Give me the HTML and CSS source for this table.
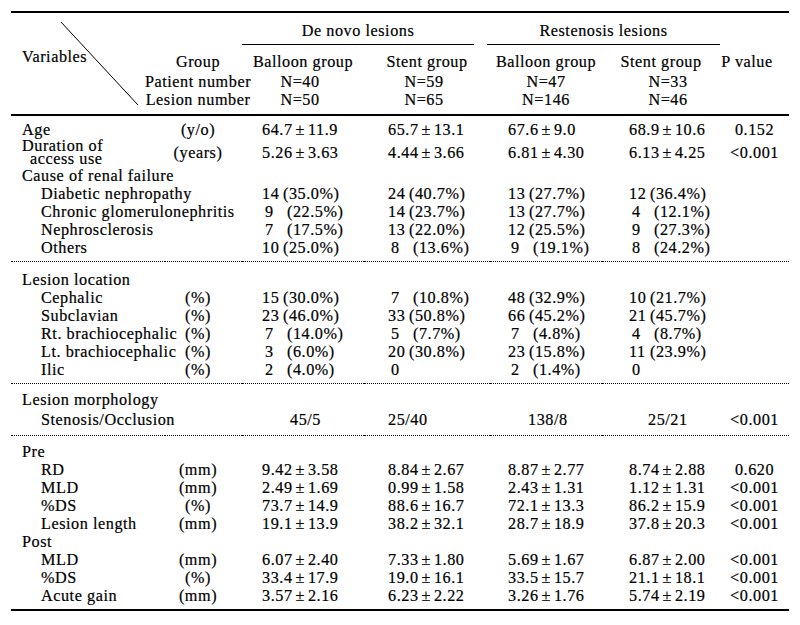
FILE: index.html
```html
<!DOCTYPE html>
<html lang="en">
<head>
<meta charset="utf-8">
<title>Table</title>
<link rel="stylesheet" href="styles.css">
</head>
<body>
<div class="figure">
  <svg class="diag" width="160" height="120" viewBox="0 0 160 120" aria-hidden="true">
    <line x1="61" y1="22" x2="138" y2="105" stroke="#000" stroke-width="1"/>
  </svg>
  <div class="toprule"></div>
  <table class="tbl">
    <colgroup>
      <col class="w0"><col class="w1"><col class="w2"><col class="w3"><col class="w4"><col class="w5"><col class="w6">
    </colgroup>
    <thead>
      <tr class="ra">
        <th></th><th></th>
        <th colspan="2"><div class="span dn">De novo lesions</div></th>
        <th colspan="2"><div class="span rs">Restenosis lesions</div></th>
        <th></th>
      </tr>
      <tr class="rb">
        <th class="var">Variables</th>
        <th class="unit">Group</th>
        <th class="c">Balloon group</th>
        <th class="c">Stent group</th>
        <th class="c">Balloon group</th>
        <th class="c">Stent group</th>
        <th class="c pvh">P value</th>
      </tr>
      <tr class="rc">
        <th></th>
        <th class="unit"><div class="ctr"><span>Patient number<br>Lesion number</span></div></th>
        <th class="c n2">N=40<br>N=50</th>
        <th class="c n3">N=59<br>N=65</th>
        <th class="c n4">N=47<br>N=146</th>
        <th class="c n5">N=33<br>N=46</th>
        <th></th>
      </tr>
    </thead>
    <tbody class="sec">
      <tr>
        <td class="lab">Age</td><td class="unit">(y/o)</td>
        <td class="v2">64.7<span class="pm">±</span>11.9</td>
        <td class="v3">65.7<span class="pm">±</span>13.1</td>
        <td class="v4">67.6<span class="pm">±</span>9.0</td>
        <td class="v5">68.9<span class="pm">±</span>10.6</td>
        <td class="pv">0.152</td>
      </tr>
      <tr class="dur">
        <td class="lab"><div class="two">Duration of<br><span class="ind">access use</span></div></td><td class="unit">(years)</td>
        <td class="v2">5.26<span class="pm">±</span>3.63</td>
        <td class="v3">4.44<span class="pm">±</span>3.66</td>
        <td class="v4">6.81<span class="pm">±</span>4.30</td>
        <td class="v5">6.13<span class="pm">±</span>4.25</td>
        <td class="pv">&lt;0.001</td>
      </tr>
      <tr>
        <td class="lab">Cause of renal failure</td><td></td><td></td><td></td><td></td><td></td><td></td>
      </tr>
      <tr>
        <td class="sub">Diabetic nephropathy</td><td></td>
        <td class="v2"><span class="n">14</span>(35.0%)</td>
        <td class="v3"><span class="n">24</span>(40.7%)</td>
        <td class="v4"><span class="n">13</span>(27.7%)</td>
        <td class="v5"><span class="n">12</span>(36.4%)</td>
        <td></td>
      </tr>
      <tr>
        <td class="sub">Chronic glomerulonephritis</td><td></td>
        <td class="v2"><span class="n s">9</span>(22.5%)</td>
        <td class="v3"><span class="n">14</span>(23.7%)</td>
        <td class="v4"><span class="n">13</span>(27.7%)</td>
        <td class="v5"><span class="n s">4</span>(12.1%)</td>
        <td></td>
      </tr>
      <tr>
        <td class="sub">Nephrosclerosis</td><td></td>
        <td class="v2"><span class="n s">7</span>(17.5%)</td>
        <td class="v3"><span class="n">13</span>(22.0%)</td>
        <td class="v4"><span class="n">12</span>(25.5%)</td>
        <td class="v5"><span class="n s">9</span>(27.3%)</td>
        <td></td>
      </tr>
      <tr class="last">
        <td class="sub">Others</td><td></td>
        <td class="v2"><span class="n">10</span>(25.0%)</td>
        <td class="v3"><span class="n s">8</span>(13.6%)</td>
        <td class="v4"><span class="n s">9</span>(19.1%)</td>
        <td class="v5"><span class="n s">8</span>(24.2%)</td>
        <td></td>
      </tr>
    </tbody>
    <tbody class="sec s2">
      <tr class="first">
        <td class="lab">Lesion location</td><td></td><td></td><td></td><td></td><td></td><td></td>
      </tr>
      <tr>
        <td class="sub">Cephalic</td><td class="unit">(%)</td>
        <td class="v2"><span class="n">15</span>(30.0%)</td>
        <td class="v3"><span class="n s">7</span>(10.8%)</td>
        <td class="v4"><span class="n">48</span>(32.9%)</td>
        <td class="v5"><span class="n">10</span>(21.7%)</td>
        <td></td>
      </tr>
      <tr>
        <td class="sub">Subclavian</td><td class="unit">(%)</td>
        <td class="v2"><span class="n">23</span>(46.0%)</td>
        <td class="v3"><span class="n">33</span>(50.8%)</td>
        <td class="v4"><span class="n">66</span>(45.2%)</td>
        <td class="v5"><span class="n">21</span>(45.7%)</td>
        <td></td>
      </tr>
      <tr>
        <td class="sub">Rt. brachiocephalic</td><td class="unit">(%)</td>
        <td class="v2"><span class="n s">7</span>(14.0%)</td>
        <td class="v3"><span class="n s">5</span>(7.7%)</td>
        <td class="v4"><span class="n s">7</span>(4.8%)</td>
        <td class="v5"><span class="n s">4</span>(8.7%)</td>
        <td></td>
      </tr>
      <tr>
        <td class="sub">Lt. brachiocephalic</td><td class="unit">(%)</td>
        <td class="v2"><span class="n s">3</span>(6.0%)</td>
        <td class="v3"><span class="n">20</span>(30.8%)</td>
        <td class="v4"><span class="n">23</span>(15.8%)</td>
        <td class="v5"><span class="n">11</span>(23.9%)</td>
        <td></td>
      </tr>
      <tr class="last">
        <td class="sub">Ilic</td><td class="unit">(%)</td>
        <td class="v2"><span class="n s">2</span>(4.0%)</td>
        <td class="v3"><span class="n s">0</span></td>
        <td class="v4"><span class="n s">2</span>(1.4%)</td>
        <td class="v5"><span class="n s">0</span></td>
        <td></td>
      </tr>
    </tbody>
    <tbody class="sec s3">
      <tr class="first">
        <td class="lab">Lesion morphology</td><td></td><td></td><td></td><td></td><td></td><td></td>
      </tr>
      <tr class="last sten">
        <td class="sub">Stenosis/Occlusion</td><td></td>
        <td class="st2">45/5</td>
        <td class="st3">25/40</td>
        <td class="st4">138/8</td>
        <td class="st5">25/21</td>
        <td class="pv">&lt;0.001</td>
      </tr>
    </tbody>
    <tbody class="sec s4">
      <tr class="first">
        <td class="lab">Pre</td><td></td><td></td><td></td><td></td><td></td><td></td>
      </tr>
      <tr>
        <td class="sub">RD</td><td class="unit">(mm)</td>
        <td class="v2">9.42<span class="pm">±</span>3.58</td>
        <td class="v3">8.84<span class="pm">±</span>2.67</td>
        <td class="v4">8.87<span class="pm">±</span>2.77</td>
        <td class="v5">8.74<span class="pm">±</span>2.88</td>
        <td class="pv">0.620</td>
      </tr>
      <tr>
        <td class="sub">MLD</td><td class="unit">(mm)</td>
        <td class="v2">2.49<span class="pm">±</span>1.69</td>
        <td class="v3">0.99<span class="pm">±</span>1.58</td>
        <td class="v4">2.43<span class="pm">±</span>1.31</td>
        <td class="v5">1.12<span class="pm">±</span>1.31</td>
        <td class="pv">&lt;0.001</td>
      </tr>
      <tr>
        <td class="sub">%DS</td><td class="unit">(%)</td>
        <td class="v2">73.7<span class="pm">±</span>14.9</td>
        <td class="v3">88.6<span class="pm">±</span>16.7</td>
        <td class="v4">72.1<span class="pm">±</span>13.3</td>
        <td class="v5">86.2<span class="pm">±</span>15.9</td>
        <td class="pv">&lt;0.001</td>
      </tr>
      <tr>
        <td class="sub">Lesion length</td><td class="unit">(mm)</td>
        <td class="v2">19.1<span class="pm">±</span>13.9</td>
        <td class="v3">38.2<span class="pm">±</span>32.1</td>
        <td class="v4">28.7<span class="pm">±</span>18.9</td>
        <td class="v5">37.8<span class="pm">±</span>20.3</td>
        <td class="pv">&lt;0.001</td>
      </tr>
      <tr>
        <td class="lab">Post</td><td></td><td></td><td></td><td></td><td></td><td></td>
      </tr>
      <tr>
        <td class="sub">MLD</td><td class="unit">(mm)</td>
        <td class="v2">6.07<span class="pm">±</span>2.40</td>
        <td class="v3">7.33<span class="pm">±</span>1.80</td>
        <td class="v4">5.69<span class="pm">±</span>1.67</td>
        <td class="v5">6.87<span class="pm">±</span>2.00</td>
        <td class="pv">&lt;0.001</td>
      </tr>
      <tr>
        <td class="sub">%DS</td><td class="unit">(%)</td>
        <td class="v2">33.4<span class="pm">±</span>17.9</td>
        <td class="v3">19.0<span class="pm">±</span>16.1</td>
        <td class="v4">33.5<span class="pm">±</span>15.7</td>
        <td class="v5">21.1<span class="pm">±</span>18.1</td>
        <td class="pv">&lt;0.001</td>
      </tr>
      <tr class="last">
        <td class="sub">Acute gain</td><td class="unit">(mm)</td>
        <td class="v2">3.57<span class="pm">±</span>2.16</td>
        <td class="v3">6.23<span class="pm">±</span>2.22</td>
        <td class="v4">3.26<span class="pm">±</span>1.76</td>
        <td class="v5">5.74<span class="pm">±</span>2.19</td>
        <td class="pv">&lt;0.001</td>
      </tr>
    </tbody>
  </table>
</div>
</body>
</html>
```
FILE: styles.css
```css
html, body {
  margin: 0;
  padding: 0;
  background: #fff;
}
body {
  font-family: "Liberation Serif", "Times New Roman", serif;
  font-size: 16.2px;
  color: #000;
  letter-spacing: 0.55px;
}
.figure {
  position: relative;
  width: 778px;
  padding: 11px 0 0 11px;
}
.diag {
  position: absolute;
  left: 0;
  top: 0;
  pointer-events: none;
}
.toprule {
  width: 778px;
  height: 2px;
  background: #000;
}
.tbl {
  border-collapse: separate;
  border-spacing: 0;
  table-layout: fixed;
  width: 778px;
  -webkit-text-stroke: 0.2px #000;
}
.w0 { width: 154px; }
.w1 { width: 77px; }
.w2 { width: 122px; }
.w3 { width: 126px; }
.w4 { width: 112px; }
.w5 { width: 118px; }
.w6 { width: 69px; }

th, td {
  padding: 0;
  line-height: 18px;
  font-weight: normal;
  white-space: nowrap;
  vertical-align: middle;
  text-align: left;
}

/* header */
.ra th { padding-top: 9px; }
.span {
  text-align: center;
  padding-bottom: 4px;
  border-bottom: 1px solid #000;
}
.span.dn { margin-right: 16px; }
.span.rs { margin-left: -3px; }
.rb th { padding-top: 8px; }
.rb th.var {
  vertical-align: top;
  padding-top: 3px;
  padding-left: 11px;
}
th.c { text-align: center; }
th.pvh { padding-right: 15px; }
.rc th {
  padding-top: 2px;
  padding-bottom: 5px;
  border-bottom: 2px solid #000;
}
.rc th.n2 { padding-right: 6px; }
.rc th.n3 { padding-right: 6px; }
.rc th.n5 { padding-left: 14px; }
.ctr {
  display: flex;
  justify-content: center;
}
.ctr span { text-align: center; }

/* body */
.unit {
  text-align: center;
  padding-right: 11px;
}
td.lab { padding-left: 11px; }
td.sub { padding-left: 30px; }
.two { line-height: 13px; }
.ind { padding-left: 8px; }
.dur td { height: 28px; }
.sec tr:first-child td { padding-top: 5px; }
.sec .last td {
  padding-bottom: 4px;
  border-bottom: 1px dotted #000;
}
.s2 tr.first td { padding-top: 9px; }
.s3 tr.first td { padding-top: 7px; }
.s3 tr.sten td { padding-top: 2px; padding-bottom: 6px; }
.s4 tr.first td { padding-top: 7px; }
.s4 tr.last td { border-bottom: 2px solid #000; }

td.v2 { padding-left: 20px; }
td.v3 { padding-left: 24px; }
td.v4 { padding-left: 18px; }
td.v5 { padding-left: 27px; }
td.pv { text-align: center; }
td.st2 { padding-left: 48px; }
td.st3 { padding-left: 24px; }
td.st4 { padding-left: 38px; }
td.st5 { padding-left: 46px; }

.pm { margin: 0 3px; }
.n {
  display: inline-block;
  width: 21px;
}
.n.s {
  width: 22px;
  padding-left: 3px;
}
```
